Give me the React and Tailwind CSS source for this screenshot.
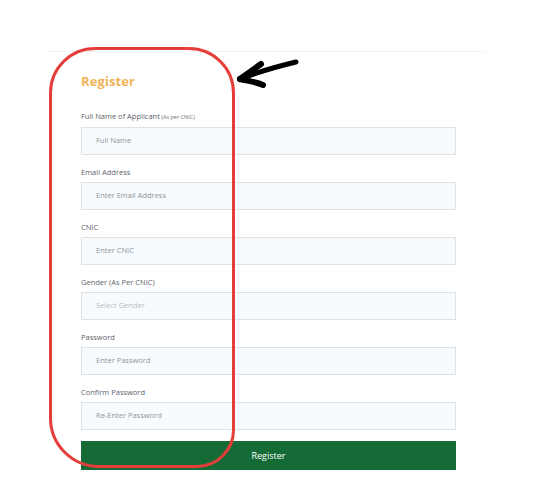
import React from "react";

const fields = [
  { label: "Full Name of Applicant", small: "(As per CNIC)", ph: "Full Name" },
  { label: "Email Address", ph: "Enter Email Address" },
  { label: "CNIC", ph: "Enter CNIC" },
  { label: "Gender (As Per CNIC)", ph: "Select Gender", light: true },
  { label: "Password", ph: "Enter Password" },
  { label: "Confirm Password", ph: "Re-Enter Password" },
];

export default function App() {
  return (
    <div
      className="relative w-[550px] h-[480px] bg-white overflow-hidden"
      style={{ fontFamily: '"Open Sans", "Noto Sans", sans-serif' }}
    >
      <div className="pt-[51px] pl-[48px] w-[485px]">
        <div className="border-t border-[#f1f3f4] pl-[33px] pr-[29px] pt-[19px]">
          <h2 className="text-[13px] leading-[20px] font-bold text-[#f2b358] tracking-[0.1px]">Register</h2>
          <div className="mt-[20px] flex flex-col gap-[12px]">
            {fields.map((f) => (
              <div key={f.label} className="flex flex-col">
                <div className="text-[7.5px] leading-[10px] text-[#5d646b] mb-[5px]">
                  {f.label}
                  {f.small && <span className="text-[5.5px] text-[#6b7178]"> {f.small}</span>}
                </div>
                <div className="h-[28px] border border-[#dde2e6] bg-[#f8fbfd] flex items-center pl-[14px]">
                  <span className={"text-[7.5px] " + (f.light ? "text-[#b8bec4]" : "text-[#8e959c]")}>{f.ph}</span>
                </div>
              </div>
            ))}
            <button className="mt-[-1px] h-[29px] bg-[#156b35] text-white text-[9px] flex items-center justify-center">
              Register
            </button>
          </div>
        </div>
      </div>

      {/* red annotation outline */}
      <div className="absolute left-[49px] top-[47px] w-[186px] h-[421px] border-[3.5px] border-[#e53e3a] rounded-[46px] rounded-bl-[50px] rounded-br-[38px] pointer-events-none" />

      {/* arrow annotation */}
      <svg className="absolute left-0 top-0 pointer-events-none" width="550" height="480">
        <g stroke="#000" strokeLinecap="round" strokeLinejoin="round" fill="none">
          <path d="M296 62 C 275 67, 258 72, 240 79" strokeWidth="5" />
          <path d="M240 79 L 261 64" strokeWidth="6" />
          <path d="M240 79 C 248 81, 256 82, 263 85" strokeWidth="6" />
        </g>
      </svg>
    </div>
  );
}
